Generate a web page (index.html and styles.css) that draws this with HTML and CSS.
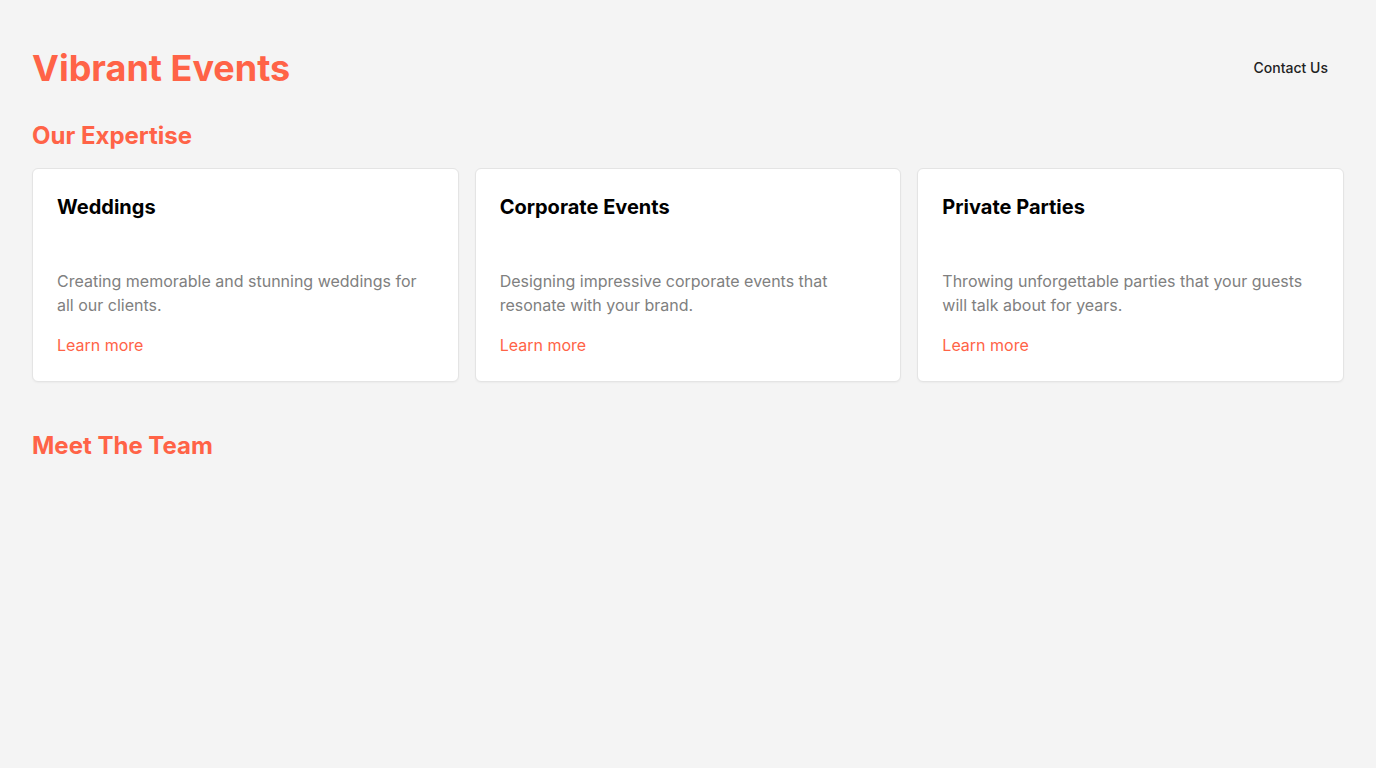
FILE: index.html
```html
<!DOCTYPE html>
<html lang="en">
<head>
<meta charset="utf-8">
<title>Vibrant Events</title>
<link rel="stylesheet" href="styles.css">
</head>
<body>
<header class="site-header">
  <h1 class="brand">Vibrant Events</h1>
  <nav class="nav"><a class="nav-link" href="#">Contact Us</a></nav>
</header>
<main>
  <section class="section">
    <h2 class="section-title">Our Expertise</h2>
    <div class="cards">
      <article class="card">
        <h3 class="card-title">Weddings</h3>
        <p class="card-text">Creating memorable and stunning weddings for all our clients.</p>
        <a class="card-link" href="#">Learn more</a>
      </article>
      <article class="card">
        <h3 class="card-title">Corporate Events</h3>
        <p class="card-text">Designing impressive corporate events that resonate with your brand.</p>
        <a class="card-link" href="#">Learn more</a>
      </article>
      <article class="card">
        <h3 class="card-title">Private Parties</h3>
        <p class="card-text">Throwing unforgettable parties that your guests will talk about for years.</p>
        <a class="card-link" href="#">Learn more</a>
      </article>
    </div>
  </section>
  <section class="section team">
    <h2 class="section-title">Meet The Team</h2>
  </section>
</main>
</body>
</html>
```
FILE: styles.css
```css
* { box-sizing: border-box; }
html, body { margin: 0; }
body {
  background: #f4f4f4;
  font-family: Inter, "Noto Sans", sans-serif;
  color: #222;
  padding: 44px 32px 32px;
}
.site-header {
  display: flex;
  justify-content: space-between;
  align-items: center;
}
.brand {
  margin: 0;
  font-size: 36px;
  line-height: 48px;
  font-weight: 700;
  color: #ff6347;
}
.nav-link {
  display: inline-block;
  padding: 8px 16px;
  font-size: 14px;
  line-height: 20px;
  font-weight: 500;
  color: #222;
  text-decoration: none;
}
.section { margin-top: 28px; }
.section-title {
  margin: 0 0 16px;
  font-size: 24px;
  line-height: 32px;
  font-weight: 700;
  color: #ff6347;
}
.cards {
  display: grid;
  grid-template-columns: repeat(3, 1fr);
  gap: 16px;
}
.card {
  background: #fff;
  border: 1px solid #e4e4e4;
  border-radius: 6px;
  box-shadow: 0 1px 2px rgba(0,0,0,0.04);
  padding: 24px;
}
.card-title {
  margin: 0 0 48px;
  font-size: 20px;
  line-height: 28px;
  font-weight: 700;
  color: #000;
}
.card-text {
  margin: 0 0 16px;
  font-size: 16px;
  line-height: 24px;
  color: #808080;
}
.card-link {
  display: block;
  font-size: 16px;
  line-height: 24px;
  color: #ff6347;
  text-decoration: none;
}
.team { margin-top: 48px; }
```
